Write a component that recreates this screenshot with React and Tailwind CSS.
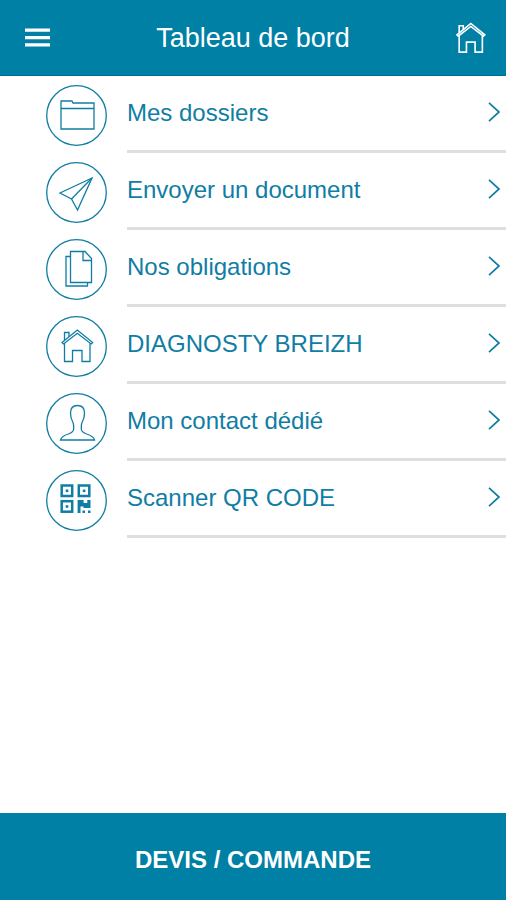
const FolderIcon = () => (
  <>
    <path d="M15 44V16h11l1 2h21v26z" />
    <path d="M15 23.500h33" />
  </>
);

const PlaneIcon = () => (
  <>
    <path d="M46 16 14 31l11.500 6L31.500 48z" />
    <path d="M46 16 25.500 37" />
  </>
);

const DocumentsIcon = () => (
  <>
    <path d="M24.500 12.500H39l6.500 7V43.500h-21z" />
    <path d="M37 13v8.500h8.500" />
    <path d="M24.500 17.500h-4.500v29.500h21.500v-3.500" />
  </>
);

const HouseIcon = () => (
  <>
    <path d="M16 26.500 31.300 14l15.400 12.500-1.500 1.500L31.300 17.300 17.500 28z" />
    <path d="M18.500 27.300v18.200h8V34.500h9.500v11h8V27.300" />
    <path d="M18.500 24.300v-7.800h4.500v4.200" />
  </>
);

const PersonIcon = () => (
  <path d="M31.500 12.500c-4.500 0-7 3-7 7.500 0 3.500.8 7 2.500 9.500.8 1.800.8 4 .7 6.500-.3 3-2.200 4-5.200 5-4 1.200-7.200 2.500-8 6h34c-.8-3.500-4-4.800-8-6-3-1-4.900-2-5.200-5-.1-2.500-.1-4.700.7-6.500 1.700-2.500 2.500-6 2.500-9.500 0-4.500-2.500-7.500-7-7.500z" />
);

const QrIcon = () => (
  <>
    <g strokeWidth="2.500">
      <rect x="15.700" y="15.500" width="10.500" height="10.500" />
      <rect x="32.800" y="15.500" width="10.500" height="10.500" />
      <rect x="15.700" y="31.200" width="10.500" height="10.500" />
    </g>
    <g fill="currentColor" stroke="none">
      <rect x="19.700" y="19.500" width="2.600" height="2.600" />
      <rect x="36.800" y="19.500" width="2.600" height="2.600" />
      <rect x="19.700" y="35.200" width="2.600" height="2.600" />
      <path d="M31.600 30h6v3h3.700v-3h3.200v8h-7v-1.500h-3v6.500h-2.900z" />
      <rect x="36.500" y="40.500" width="2.500" height="2.500" />
      <rect x="42" y="40.500" width="2.500" height="2.500" />
    </g>
  </>
);

const menuItems = [
  { label: 'Mes dossiers', icon: FolderIcon },
  { label: 'Envoyer un document', icon: PlaneIcon },
  { label: 'Nos obligations', icon: DocumentsIcon },
  { label: 'DIAGNOSTY BREIZH', icon: HouseIcon },
  { label: 'Mon contact dédié', icon: PersonIcon },
  { label: 'Scanner QR CODE', icon: QrIcon },
];

function MenuItem({ label, icon: Icon }) {
  return (
    <li>
      <a href="#" className="flex items-start pl-[46px] text-[#107da4]">
        <svg viewBox="0 0 61 61" className="mt-[9px] w-[61px] h-[61px] shrink-0" fill="none" stroke="currentColor" strokeWidth="1.300">
          <circle cx="30.500" cy="30.500" r="29.800" />
          <Icon />
        </svg>
        <span className="ml-5 flex h-[77px] flex-1 items-center justify-between border-b-[3px] border-[#dedede] pr-1.5">
          <span className="text-2xl">{label}</span>
          <svg viewBox="0 0 12 20" className="mb-0.5 w-3 h-5" fill="none" stroke="currentColor" strokeWidth="1.700">
            <path d="M1 .8 11 10 1 19.200" />
          </svg>
        </span>
      </a>
    </li>
  );
}

export default function App() {
  return (
    <div className="flex min-h-screen flex-col bg-white font-['Liberation_Sans',Arial,sans-serif]">
      {/* Header */}
      <header className="flex h-[76px] items-center justify-between border-b border-[#006b94] bg-[#0080a5] pl-[25px] pr-5 text-white">
        <button type="button" aria-label="Menu" className="flex items-center">
          <svg viewBox="0 0 25 19" className="w-[25px] h-[19px]" fill="currentColor">
            <path d="M0 .5h25v3.300H0zM0 8h25v3.300H0zM0 15.200h25v3.300H0z" />
          </svg>
        </button>
        <h1 className="text-[27px] leading-8">Tableau de bord</h1>
        <button type="button" aria-label="Accueil">
          <svg viewBox="15 12.500 33 35" className="w-[30px] h-8" fill="none" stroke="currentColor" strokeWidth="1.800">
            <HouseIcon />
          </svg>
        </button>
      </header>

      {/* Menu */}
      <main className="flex-1">
        <ul>
          {menuItems.map((item) => (
            <MenuItem key={item.label} {...item} />
          ))}
        </ul>
      </main>

      {/* Footer */}
      <footer>
        <button type="button" className="h-[87px] w-full bg-[#0080a5] pt-1.5 text-2xl font-bold text-white">
          DEVIS / COMMANDE
        </button>
      </footer>
    </div>
  );
}
